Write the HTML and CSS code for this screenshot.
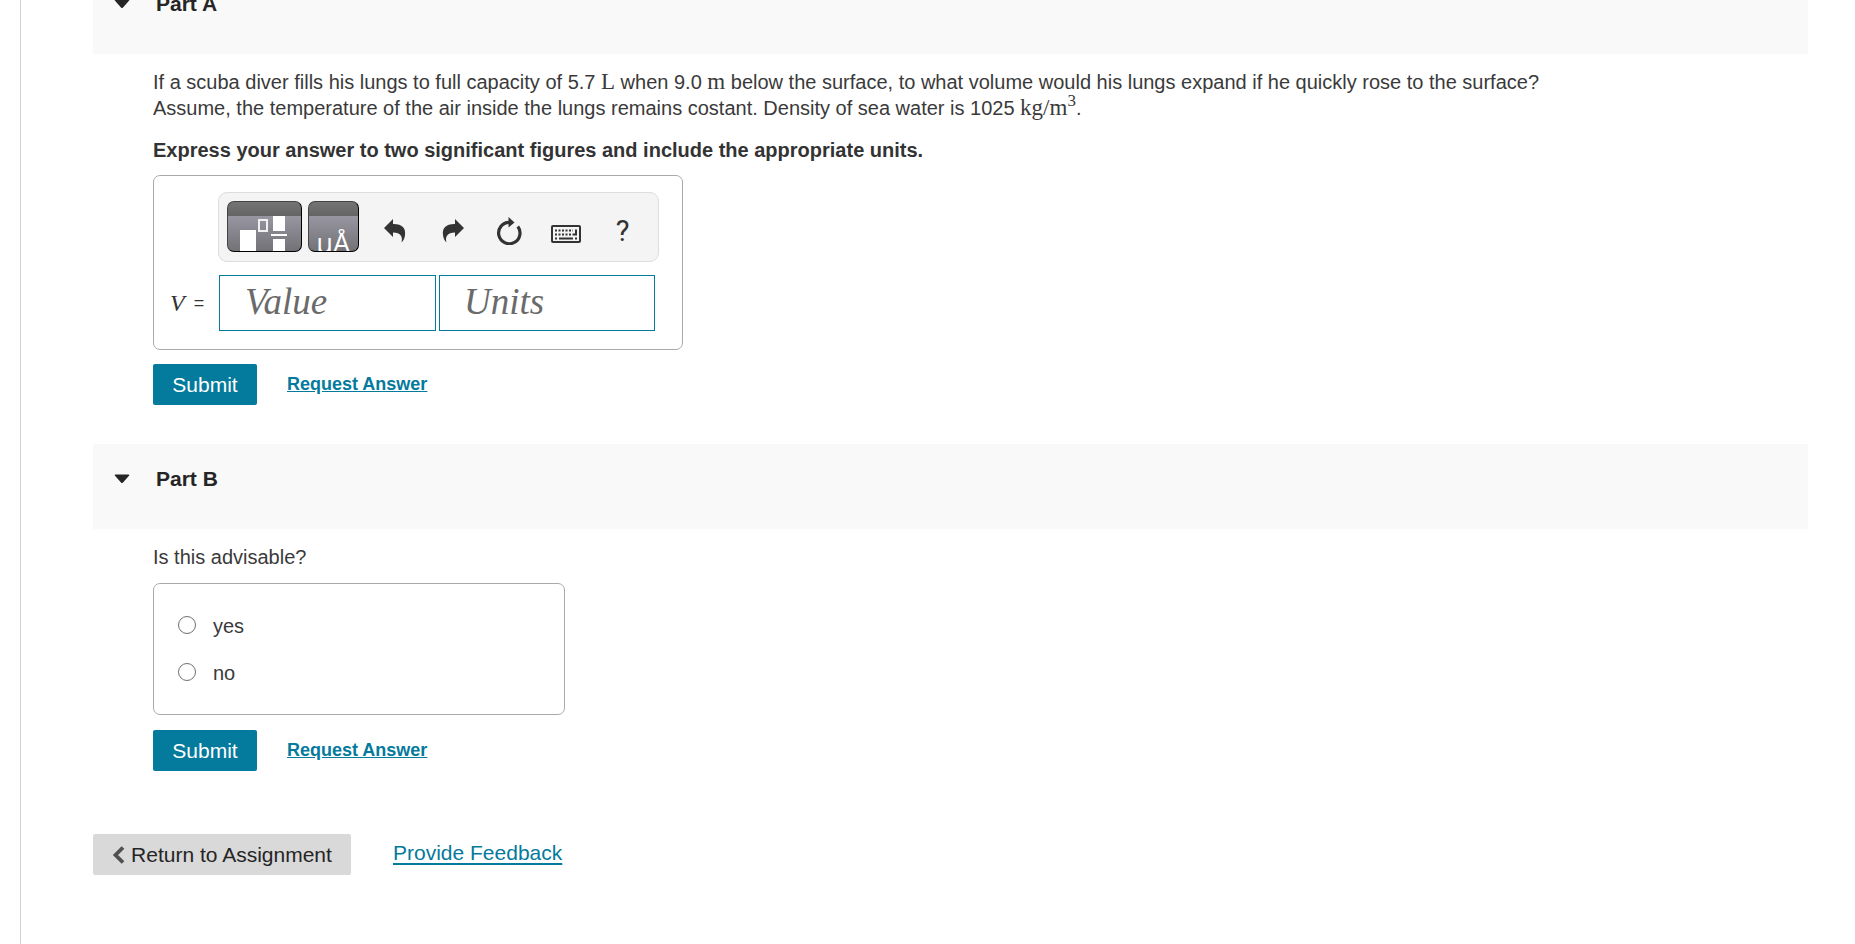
FILE: index.html
```html
<!DOCTYPE html>
<html lang="en">
<head>
<meta charset="utf-8">
<title>Assignment</title>
<link rel="stylesheet" href="styles.css">
</head>
<body>
<main class="page">
  <section class="part part-first">
    <h2 class="part-header"><svg class="caret" viewBox="0 0 16 10" aria-hidden="true"><path d="M1.500.5h13c.9 0 1 .8.5 1.300L9 8.600q-1 1-2 0L1 1.800C.5 1.300.6.5 1.500.5z"/></svg>Part A</h2>
    <div class="part-body">
      <p class="question">If a scuba diver fills his lungs to full capacity of 5.7 <span class="math">L</span> when 9.0 <span class="math">m</span> below the surface, to what volume would his lungs expand if he quickly rose to the surface? Assume, the temperature of the air inside the lungs remains costant. Density of sea water is 1025 <span class="math">kg/m<sup>3</sup></span>.</p>
      <p class="instruction">Express your answer to two significant figures and include the appropriate units.</p>
      <div class="answer-box math-answer">
        <div class="toolbar">
          <button class="palette palette-wide" type="button" aria-label="Templates"><svg viewBox="0 0 73 49" aria-hidden="true"><path fill="#fff" d="M12 28h16v21H12zM45 14h12v15H45zM43 32h16v2H43zM45 37h12v12H45z"/><path fill="none" stroke="#f0f0f0" stroke-width="2" d="M31 18h8v11h-8z"/></svg></button>
          <button class="palette palette-narrow" type="button" aria-label="Symbols"><span>μÅ</span></button>
          <button class="tool" type="button" aria-label="Undo"><svg viewBox="0 0 22 24" aria-hidden="true"><path d="M0 9 9 0v5c9-.2 13 4 12 11-.3 3-1.500 5.500-3.500 7.500C19 18 17 13.500 9 13.500V18z"/></svg></button>
          <button class="tool arrow" type="button" aria-label="Redo"><svg viewBox="0 0 22 24" aria-hidden="true"><path d="M22 9 13 0v5C4 4.800 0 9 1 16c.3 3 1.500 5.500 3.500 7.500C3 18 5 13.500 13 13.500V18z"/></svg></button>
          <button class="tool" type="button" aria-label="Reset"><svg class="icon-reset" viewBox="0 0 26 28" aria-hidden="true"><path fill="none" stroke="#333" stroke-width="3.200" d="M21.800 9.500A10.700 10.700 0 1 1 13 5.300"/><path d="m12.500 0 6 5.500-6 5z"/></svg></button>
          <button class="tool" type="button" aria-label="Keyboard"><svg class="icon-keyboard" viewBox="0 0 30 18" aria-hidden="true"><rect x="1" y="1" width="28" height="16" rx="1" fill="none" stroke="#333" stroke-width="2"/><path fill="none" stroke="#333" stroke-width="2" stroke-dasharray="2 1.500" d="M4 5.500h18M4 9.500h18"/><path d="M4 12.500h2v2H4zM24 12.500h2v2h-2zM8 12.500h14v2H8zM24 4.500h2v6h-4v-2h2z"/></svg></button>
          <button class="tool help" type="button" aria-label="Help">?</button>
        </div>
        <div class="equation">
          <span class="symbol"><i>V</i><b>=</b></span>
          <input class="field" type="text" placeholder="Value" aria-label="Value"><input class="field" type="text" placeholder="Units" aria-label="Units">
        </div>
      </div>
      <div class="actions">
        <button class="submit" type="button">Submit</button>
        <a class="request" href="#">Request Answer</a>
      </div>
    </div>
  </section>
  <section class="part">
    <h2 class="part-header"><svg class="caret" viewBox="0 0 16 10" aria-hidden="true"><path d="M1.500.5h13c.9 0 1 .8.5 1.300L9 8.600q-1 1-2 0L1 1.800C.5 1.300.6.5 1.500.5z"/></svg>Part B</h2>
    <div class="part-body">
      <p class="question">Is this advisable?</p>
      <div class="answer-box choices">
        <label class="choice"><input type="radio" name="advisable"><span>yes</span></label>
        <label class="choice"><input type="radio" name="advisable"><span>no</span></label>
      </div>
      <div class="actions">
        <button class="submit" type="button">Submit</button>
        <a class="request" href="#">Request Answer</a>
      </div>
    </div>
  </section>
  <footer class="footer">
    <button class="return" type="button"><svg viewBox="0 0 13 18" aria-hidden="true"><path fill="none" stroke="#505050" stroke-width="3.800" d="M11 1.500 3.500 9l7.500 7.500"/></svg>Return to Assignment</button>
    <a class="feedback" href="#">Provide Feedback</a>
  </footer>
</main>
</body>
</html>
```
FILE: styles.css
```css
* { box-sizing: border-box; }
body {
  margin: 0;
  overflow: hidden;
  background: #fff;
  color: #3a3a3a;
  font: 20px/26px "Liberation Sans", Arial, sans-serif;
}
button, input { font: inherit; color: inherit; margin: 0; }
button { border: 0; padding: 0; cursor: pointer; }
p, h2 { margin: 0; }
.page {
  display: flow-root;
  min-height: 100vh;
  margin-left: 20px;
  padding: 0 47px 0 72px;
  border-left: 1px solid #d0d0d0;
}
/* The view is scrolled a little way into the first heading. */
.part-first { margin-top: -31px; }
.part-header {
  display: flex;
  align-items: flex-start;
  gap: 26px;
  height: 85px;
  padding: 22px 21px;
  background: #f9f9f9;
  color: #252525;
  font-size: 21px;
  font-weight: bold;
}
.caret { width: 16px; height: 10px; margin-top: 8px; fill: #252525; }
.part-body { padding: 15px 0 39px 60px; }
.question { max-width: 1420px; }
.math { font-family: "Liberation Serif", "Times New Roman", serif; font-size: 23px; line-height: 20px; }
.math sup { font-size: 17px; line-height: 0; }
.instruction { margin-top: 16px; color: #333; font-weight: bold; }
.answer-box { margin-top: 12px; border: 1px solid #aaa; border-radius: 7px; }
.math-answer { width: 530px; padding: 16px 23px 18px 16px; }
.toolbar {
  display: flex;
  width: 441px;
  height: 70px;
  margin-left: 48px;
  padding: 8px;
  border: 1px solid #ddd;
  border-radius: 9px;
  background: #f4f4f4;
  color: #333;
}
.palette {
  height: 51px;
  overflow: hidden;
  border: 1px solid #000;
  border-top-color: #444;
  border-left-color: #444;
  border-radius: 7px;
  background: linear-gradient(#747474 0, #646464 14px, #9896a1 14px, #727276 100%);
  color: #fff;
}
.palette-wide { width: 75px; }
.palette-wide svg { display: block; width: 73px; height: 49px; }
.palette-narrow { width: 51px; margin-left: 6px; padding: 23px 0 0; font: 27px/35px "Open Sans", sans-serif; }
.palette-narrow span { display: block; height: 35px; }
.tool {
  display: flex;
  align-items: center;
  justify-content: center;
  width: 57px;
  height: 51px;
  padding: 8px 0 0 2px;
  background: none;
}
.tool svg { width: 22px; height: 24px; fill: #333; }
.palette-narrow + .tool { margin-left: 7px; }
.arrow { padding-left: 4px; }
.tool .icon-reset { width: 26px; height: 28px; }
.tool .icon-keyboard { width: 30px; height: 18px; margin-top: 6px; }
.help { font: 29px/34px Roboto, sans-serif; }
.equation { display: flex; align-items: center; margin-top: 13px; }
.symbol { display: flex; align-items: center; gap: 9px; width: 49px; color: #333; }
.symbol i { font: italic 24px/26px "Liberation Serif", serif; }
.symbol b { font-size: 18px; font-weight: normal; }
.field {
  width: 217px;
  height: 56px;
  padding: 0 25px 3px;
  border: 1px solid #047a9c;
  border-radius: 0;
  background: #fff;
  font: italic 37px/48px "Liberation Serif", "Times New Roman", serif;
}
.field + .field { width: 216px; margin-left: 3px; padding-left: 24px; }
.field::placeholder { color: #6a6a6a; opacity: 1; }
.actions { display: flex; align-items: center; gap: 30px; margin-top: 14px; }
.submit {
  width: 104px;
  height: 41px;
  border-radius: 2px;
  background: #047a9c;
  color: #fff;
  font-size: 21px;
}
.request { margin-bottom: 2px; color: #047a9c; font-size: 18px; font-weight: bold; }
.choices { width: 412px; margin-top: 13px; padding: 18px 24px; }
.choices + .actions { margin-top: 15px; }
.choice { display: flex; align-items: center; height: 47px; gap: 17px; }
.choice input {
  appearance: none;
  width: 18px;
  height: 18px;
  margin-bottom: 2px;
  border: 1px solid #707070;
  border-radius: 50%;
  background: #fff;
}
.footer { display: flex; align-items: center; gap: 42px; margin-top: 24px; }
.return {
  display: flex;
  align-items: center;
  justify-content: center;
  gap: 6px;
  width: 258px;
  height: 41px;
  border-radius: 2px;
  background: #d9d9d9;
  color: #252525;
  font-size: 21px;
}
.return svg { width: 13px; height: 18px; }
.feedback { margin-bottom: 4px; color: #047a9c; font-size: 21px; text-decoration-thickness: 2px; text-underline-offset: 3px; }
```
